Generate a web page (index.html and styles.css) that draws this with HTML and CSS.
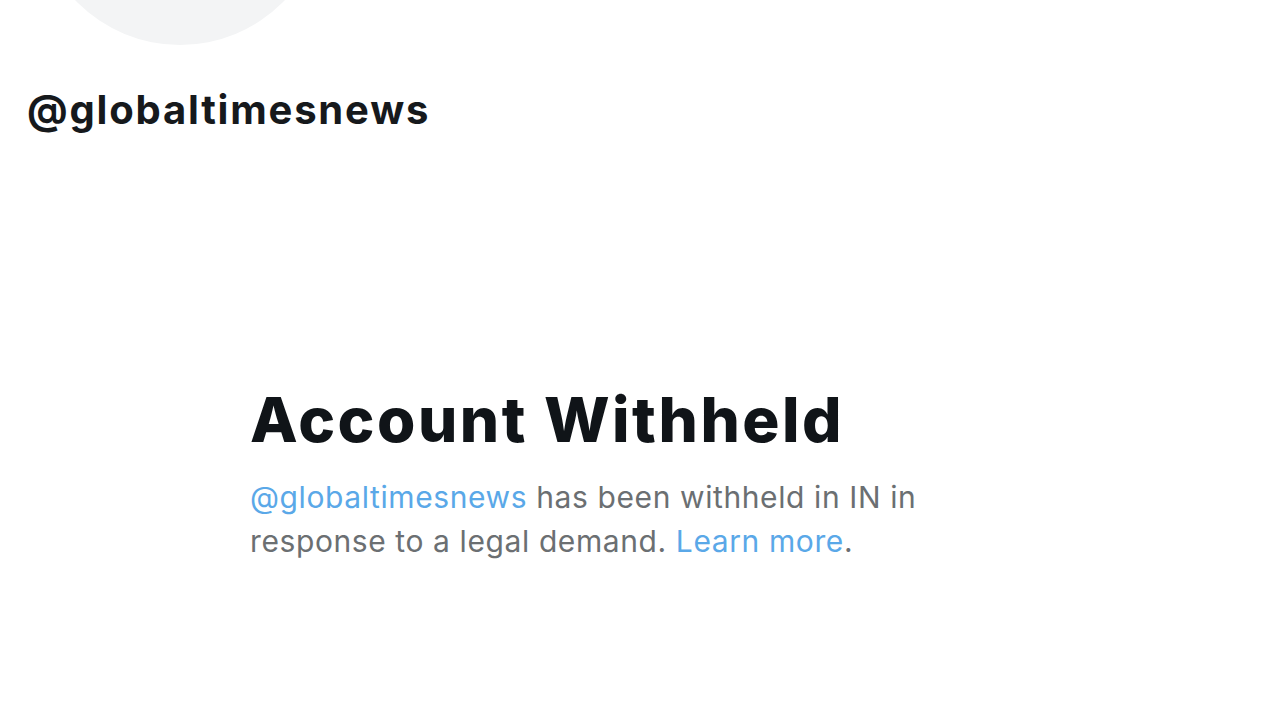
FILE: index.html
```html
<!DOCTYPE html>
<html lang="en">
<head>
<meta charset="UTF-8">
<meta name="viewport" content="width=device-width, initial-scale=1.0">
<title>Account Withheld</title>
<link rel="stylesheet" href="styles.css">
</head>
<body>

<div class="profile">
  <div class="avatar"></div>
  <div class="handle">@globaltimesnews</div>
</div>

<div class="withheld">
  <h1 class="withheld-title">Account Withheld</h1>
  <p class="withheld-text">
    <a href="#" class="link">@globaltimesnews</a> has been withheld in IN in
    response to a legal demand. <a href="#" class="link">Learn more</a>.
  </p>
</div>

</body>
</html>
```

FILE: styles.css
```css
/* Page */
body {
  margin: 0;
  background: #ffffff;
  font-family: Inter, "Noto Sans", sans-serif;
  color: #0f1419;
  height: 720px;
  overflow: hidden;
}

/* Profile header */
.profile {
  padding-left: 27px;
}

.avatar {
  width: 290px;
  height: 290px;
  margin-top: -245px;
  margin-left: 8px;
  border-radius: 50%;
  background-color: #f3f4f5;
}

.handle {
  margin-top: 40px;
  font-size: 40px;
  font-weight: 700;
  letter-spacing: 1.8px;
  color: #16191c;
}

/* Withheld notice */
.withheld {
  padding-left: 250px;
  margin-top: 249px;
  max-width: 720px;
}

.withheld-title {
  margin: 0;
  font-size: 62px;
  font-weight: 800;
  letter-spacing: 2.5px;
  line-height: 1.2;
  color: #101418;
}

.withheld-text {
  margin: 18px 0 0;
  font-size: 30px;
  line-height: 44px;
  letter-spacing: 0.6px;
  color: #6b6f72;
}

.link {
  color: #5aa8e8;
  text-decoration: none;
}
```
